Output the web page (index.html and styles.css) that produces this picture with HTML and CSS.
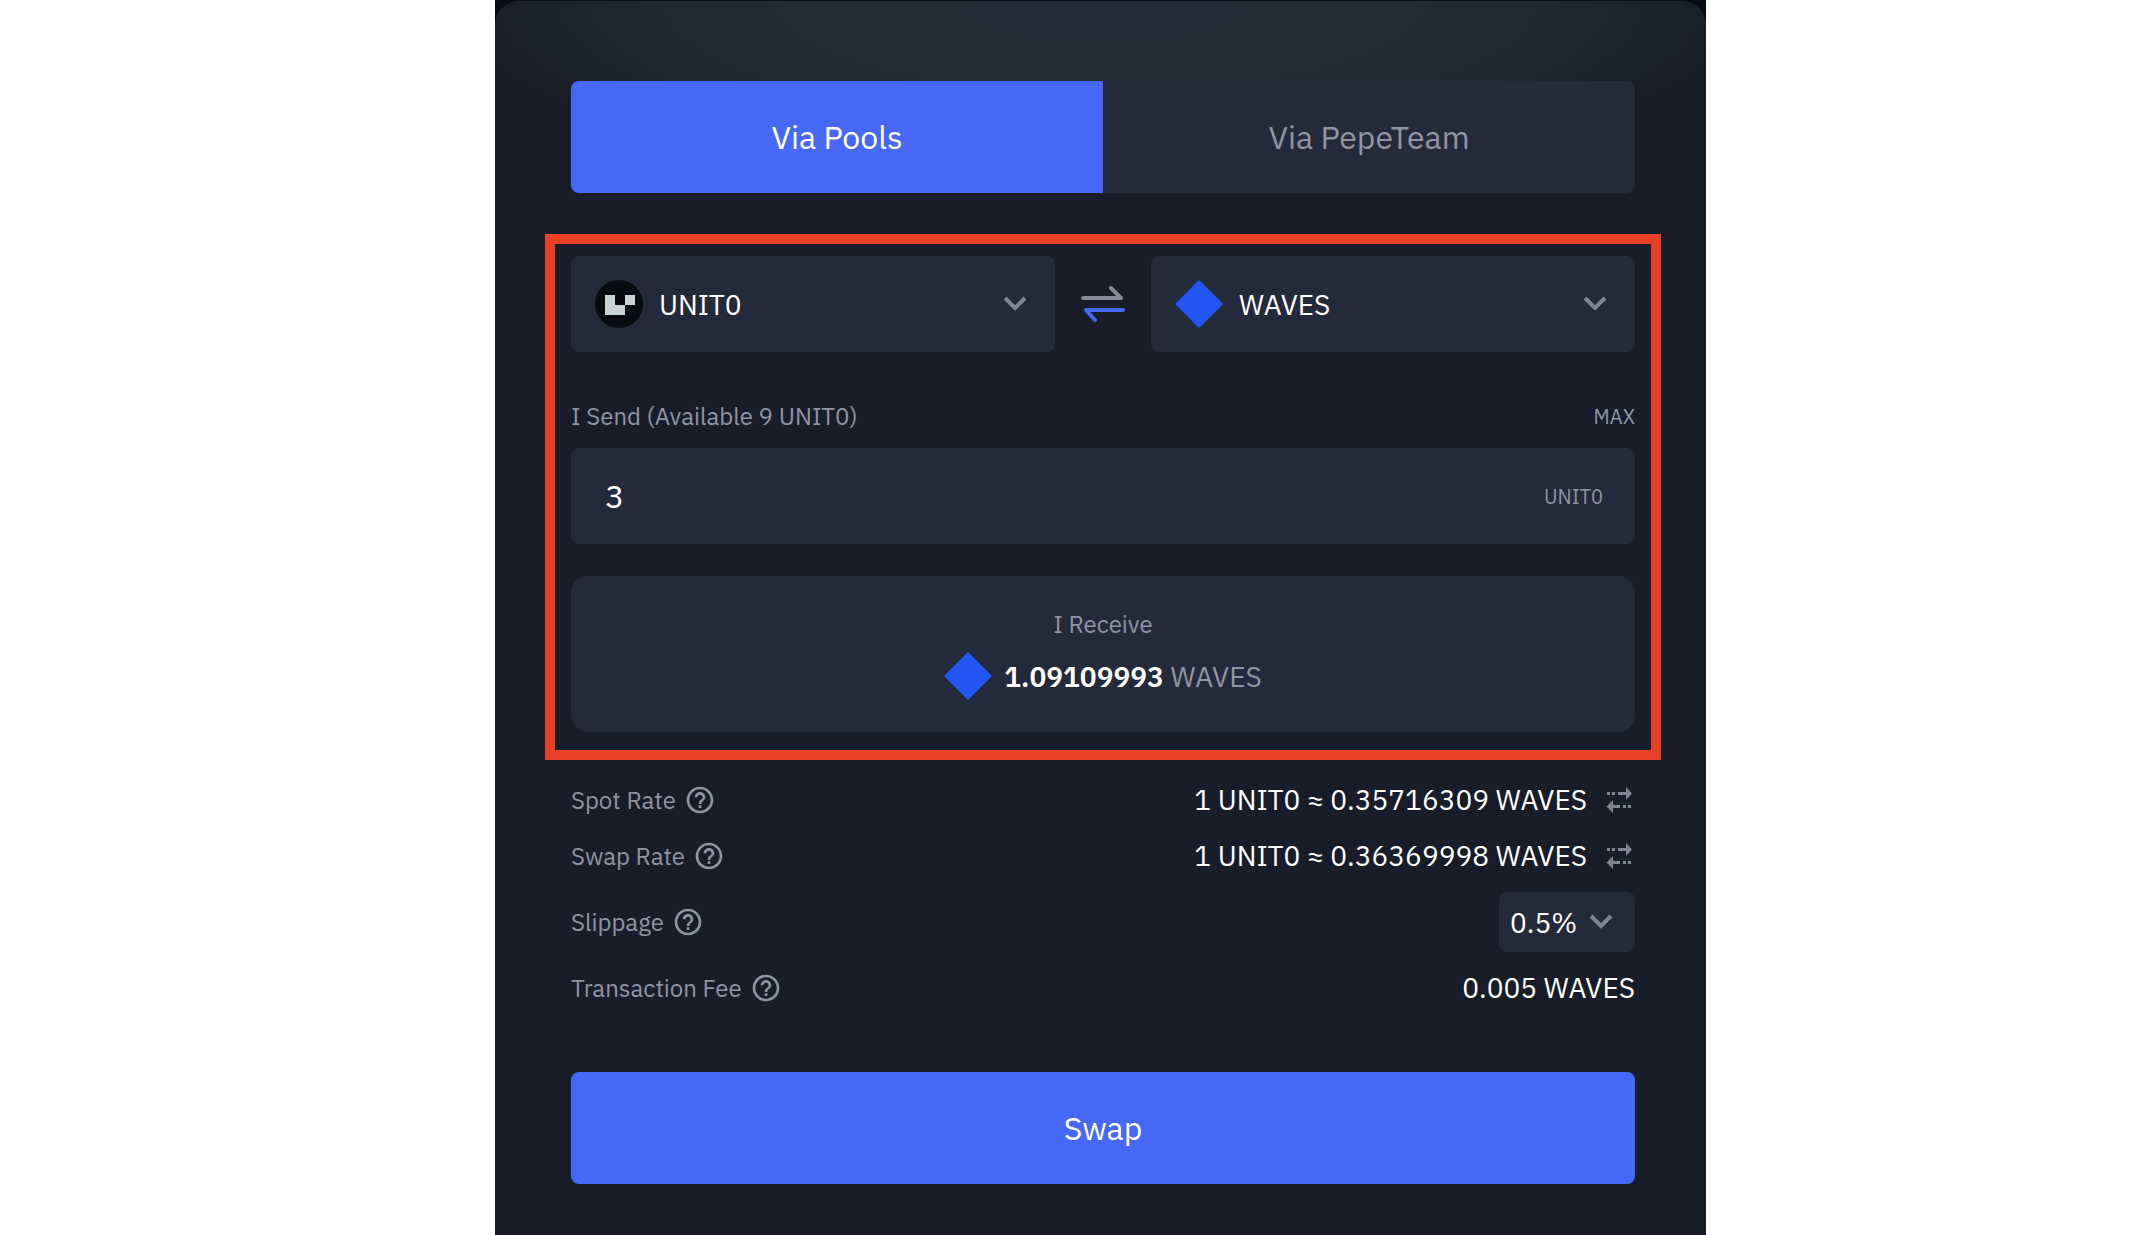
FILE: index.html
```
<!DOCTYPE html>
<html lang="en">
<head>
  <meta charset="UTF-8" />
  <meta name="viewport" content="width=device-width, initial-scale=1.0"/>
  <title>Swap UNIT0 to WAVES</title>
  <link rel="stylesheet" href="styles.css">
</head>
<body>
  <!-- shared icons -->
  <svg class="sprite" width="0" height="0" aria-hidden="true">
    <symbol id="chevron" viewBox="0 0 24 16">
      <path d="M2 2L12 12L22 2" fill="none" stroke="currentColor" stroke-width="4"/>
    </symbol>
    <symbol id="waves" viewBox="0 0 48 48">
      <path d="M24 0L48 24L24 48L0 24Z" fill="#2155f5"/>
    </symbol>
    <symbol id="help" viewBox="0 0 24 24">
      <path fill="currentColor" d="M11 18h2v-2h-2v2zm1-16C6.48 2 2 6.48 2 12s4.480 10 10 10 10-4.480 10-10S17.520 2 12 2zm0 18c-4.410 0-8-3.590-8-8s3.590-8 8-8 8 3.590 8 8-3.590 8-8 8zm0-14c-2.210 0-4 1.790-4 4h2c0-1.100.900-2 2-2s2 .900 2 2c0 2-3 1.750-3 5h2c0-2.250 3-2.500 3-5 0-2.210-1.790-4-4-4z"/>
    </symbol>
    <symbol id="flip" viewBox="0 0 30 28">
      <path fill="currentColor" d="M2 6h3v3H2zM7 6h3v3H7zM13 6h8V1l6 6.500L21 14V9h-8zM26 19h-3v3h3zM21 19h-3v3h3zM15 19H8v-5l-6.500 6.500L8 27v-5h7z"/>
    </symbol>
  </svg>

  <div class="backdrop">
  <main class="panel">
    <div class="tabs">
      <button class="tab active" type="button">Via Pools</button>
      <button class="tab" type="button">Via PepeTeam</button>
    </div>

    <section class="exchange">
      <div class="tokens">
        <div class="token">
          <svg class="token-icon" viewBox="0 0 48 48" aria-hidden="true">
            <circle cx="24" cy="24" r="24" fill="#080b10"/>
            <path d="M10 15H20V25H30V35H10ZM30 15H40V25H30Z" fill="#cad3d6"/>
          </svg>
          <select aria-label="Token to send">
            <option>UNIT0</option>
          </select>
          <svg class="chevron" aria-hidden="true"><use href="#chevron"/></svg>
        </div>

        <button class="switch" type="button" aria-label="Switch tokens">
          <svg viewBox="0 0 48 40" aria-hidden="true">
            <path d="M4 14H42L32 4" fill="none" stroke="#858997" stroke-width="4" stroke-linecap="round" stroke-linejoin="round"/>
            <path d="M44 26H7L16 36" fill="none" stroke="#4768f7" stroke-width="4" stroke-linecap="round" stroke-linejoin="round"/>
          </svg>
        </button>

        <div class="token">
          <svg class="token-icon" aria-hidden="true"><use href="#waves"/></svg>
          <select aria-label="Token to receive">
            <option>WAVES</option>
          </select>
          <svg class="chevron" aria-hidden="true"><use href="#chevron"/></svg>
        </div>
      </div>

      <div class="amount-head">
        <label for="amount">I Send (Available 9 UNIT0)</label>
        <button class="max" type="button">MAX</button>
      </div>
      <div class="amount">
        <input id="amount" type="text" inputmode="decimal" value="3">
        <span>UNIT0</span>
      </div>

      <div class="receive">
        <span class="receive-label">I Receive</span>
        <div class="receive-value">
          <svg class="token-icon" aria-hidden="true"><use href="#waves"/></svg>
          <p><strong>1.09109993</strong> WAVES</p>
        </div>
      </div>
    </section>

    <div class="details">
      <div class="row">
        <span class="name">Spot Rate <svg class="help" aria-hidden="true"><use href="#help"/></svg></span>
        <span class="value">1 UNIT0 ≈ 0.35716309 WAVES
          <button class="flip" type="button" aria-label="Flip spot rate"><svg aria-hidden="true"><use href="#flip"/></svg></button>
        </span>
      </div>
      <div class="row">
        <span class="name">Swap Rate <svg class="help" aria-hidden="true"><use href="#help"/></svg></span>
        <span class="value">1 UNIT0 ≈ 0.36369998 WAVES
          <button class="flip" type="button" aria-label="Flip swap rate"><svg aria-hidden="true"><use href="#flip"/></svg></button>
        </span>
      </div>
      <div class="row">
        <label class="name" for="slippage">Slippage <svg class="help" aria-hidden="true"><use href="#help"/></svg></label>
        <div class="slippage">
          <select id="slippage">
            <option>0.5%</option>
          </select>
          <svg class="chevron" aria-hidden="true"><use href="#chevron"/></svg>
        </div>
      </div>
      <div class="row">
        <span class="name">Transaction Fee <svg class="help" aria-hidden="true"><use href="#help"/></svg></span>
        <span class="value">0.005 WAVES</span>
      </div>
    </div>

    <button class="submit" type="button">Swap</button>
  </main>
  </div>
</body>
</html>
```
FILE: styles.css
```
* {
  box-sizing: border-box;
}

body {
  margin: 0;
  padding: 0 438px 0 495px;
  background: #fff;
  color: #fff;
  font-family: 'IBM Plex Sans', 'Noto Sans', sans-serif;
  font-size: 28px;
}

button,
input,
select {
  font: inherit;
  color: inherit;
  background: none;
  border: none;
  margin: 0;
  padding: 0;
}

button,
select {
  cursor: pointer;
}

.sprite {
  position: absolute;
}

.backdrop {
  display: flex;
  min-height: 100vh;
  padding-top: 1px;
  background: #090b14;
}

.panel {
  flex: 1;
  min-width: 0;
  padding: 80px 71px 48px 76px;
  border-radius: 24px 24px 0 0;
  background: radial-gradient(640px 180px at 50% 0, #232b39 0%, #202d36 45%, #1d272f 80%, #191c29 100%) #191c29;
}

.tabs {
  display: flex;
  border-radius: 8px;
  overflow: hidden;
  background: #252a3a;
}

.tab {
  flex: 1;
  height: 112px;
  font-size: 32px;
  color: #8f94a3;
}

.tab.active {
  background: #4768f7;
  color: #fff;
}

/* highlighted block, hangs outside the column */
.exchange {
  margin: 41px -26px 20px;
  padding: 12px 16px 18px;
  border: 10px solid #ea4025;
}

.tokens {
  display: flex;
}

.token {
  flex: 1;
  display: flex;
  align-items: center;
  gap: 16px;
  height: 96px;
  padding: 0 28px 0 24px;
  border-radius: 8px;
  background: #252a3a;
}

.token-icon {
  flex: none;
  width: 48px;
  height: 48px;
}

select {
  appearance: none;
  outline: none;
}

.token select {
  flex: 1;
  min-width: 0;
}

.chevron {
  flex: none;
  width: 24px;
  height: 16px;
  color: #7f8493;
  pointer-events: none;
}

.switch {
  width: 96px;
}

.switch svg {
  display: block;
  width: 48px;
  height: 40px;
  margin: 0 auto;
}

.amount-head {
  display: flex;
  justify-content: space-between;
  align-items: center;
  height: 32px;
  margin: 48px 0 16px;
  font-size: 24px;
  color: #8f94a3;
}

.max {
  font-size: 20px;
}

.amount {
  display: flex;
  align-items: center;
  height: 96px;
  padding: 0 32px 0 34px;
  border-radius: 8px;
  background: #252a3a;
  font-size: 20px;
  color: #8f94a3;
}

.amount input {
  flex: 1;
  min-width: 0;
  font-size: 32px;
  color: #fff;
  outline: none;
}

.receive {
  display: flex;
  flex-direction: column;
  align-items: center;
  gap: 12px;
  margin-top: 32px;
  padding: 32px 16px;
  border-radius: 16px;
  background: #252a3a;
  color: #8f94a3;
}

.receive-label {
  font-size: 24px;
  line-height: 32px;
}

.receive-value {
  display: flex;
  align-items: center;
  gap: 12px;
}

.receive-value p {
  margin: 0;
}

.receive-value strong {
  color: #fff;
  font-weight: 600;
}

.details {
  display: grid;
  gap: 16px;
}

.row {
  display: flex;
  justify-content: space-between;
  align-items: center;
  min-height: 40px;
}

.name {
  display: flex;
  align-items: center;
  gap: 8px;
  font-size: 24px;
  color: #8f94a3;
}

.help {
  width: 32px;
  height: 32px;
}

.value {
  display: flex;
  align-items: center;
  gap: 18px;
  line-height: 40px;
}

.flip {
  display: flex;
  color: #7f8493;
}

.flip svg {
  width: 30px;
  height: 28px;
}

.slippage {
  display: flex;
  align-items: center;
  gap: 11px;
  height: 60px;
  padding: 0 22px 0 11px;
  border-radius: 8px;
  background: #252a3a;
}

.submit {
  display: block;
  width: 100%;
  height: 112px;
  margin-top: 64px;
  border-radius: 8px;
  background: #4768f7;
  font-size: 32px;
}

@media (max-width: 1500px) {
  body {
    padding: 0;
  }
}
```
